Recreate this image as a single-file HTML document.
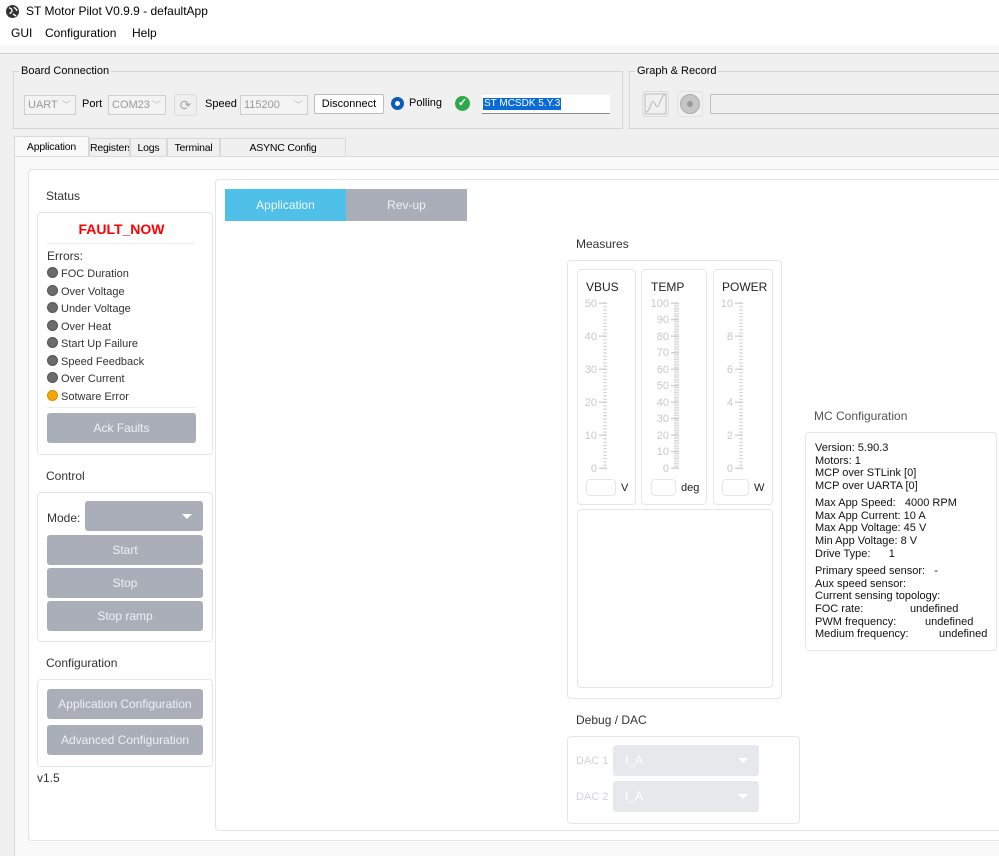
<!DOCTYPE html>
<html><head><meta charset="utf-8">
<style>
*{box-sizing:border-box;margin:0;padding:0}
body{width:999px;height:856px;overflow:hidden;background:#f0f0f0;font-family:"Liberation Sans",sans-serif;position:relative;color:#000}
.a{position:absolute}
.t{position:absolute;white-space:nowrap;font-size:12px}
.box{position:absolute;border:1px solid #e6e6e6;border-radius:4px;background:#fff}
.btn{position:absolute;background:#a9aeb8;border-radius:3px;color:#eef0f3;font-size:12px;text-align:center}
.lbl{position:absolute;font-size:12px;color:#333;white-space:nowrap}
.dot{display:inline-block;width:11px;height:11px;border-radius:50%;background:#6b6b6b;border:1px solid #555;vertical-align:-1px;margin-right:3px}
.er{position:absolute;left:47px;font-size:11px;color:#333;white-space:nowrap}
.cb{position:absolute;border:1px solid #cfcfcf;background:#f3f3f3;color:#999;font-size:11px;padding-left:3px;line-height:18px;white-space:nowrap;overflow:hidden}
.cb i{position:absolute;right:4px;top:0;font-style:normal;color:#bbb;font-size:9px}
.tab{position:absolute;top:138px;height:19px;border:1px solid #d9d9d9;border-bottom:none;background:#f0f0f0;font-size:10.5px;text-align:center;line-height:19px;white-space:nowrap;overflow:hidden;letter-spacing:-0.2px}
.mc{position:absolute;left:815px;font-size:11px;white-space:nowrap;color:#111}
</style></head><body>
<div class="a" style="left:0;top:0;width:999px;height:46px;background:#fff"></div>
<svg class="a" style="left:5px;top:4px" width="15" height="15" viewBox="0 0 15 15"><circle cx="7.5" cy="7.5" r="6.5" fill="#333"/><path d="M4 4c2 0 3 1 3 3s-2 1-2 3M9 3c1 2 3 2 3 4M8 10c1 1 2 1 3 2" stroke="#fff" stroke-width="1.3" fill="none"/></svg>
<div class="t" style="left:26px;top:4px;font-size:12px">ST Motor Pilot V0.9.9 - defaultApp</div>
<div class="t" style="left:11px;top:26px">GUI</div>
<div class="t" style="left:45px;top:26px">Configuration</div>
<div class="t" style="left:132px;top:26px">Help</div>
<div class="a" style="left:0;top:46px;width:999px;height:8px;background:#f7f7f7;border-bottom:1px solid #cfcfcf"></div>

<!-- Board connection -->
<div class="a" style="left:13px;top:71px;width:610px;height:58px;border:1px solid #d6d6d6"></div>
<div class="t" style="left:19px;top:65px;font-size:11px;background:#f0f0f0;padding:0 2px">Board Connection</div>
<div class="cb" style="left:24px;top:95px;width:52px;height:20px">UART<i>﹀</i></div>
<div class="t" style="left:82px;top:98px;font-size:11px">Port</div>
<div class="cb" style="left:108px;top:95px;width:58px;height:20px">COM23<i>﹀</i></div>
<div class="a" style="left:174px;top:94px;width:23px;height:22px;border:1px solid #dcdcdc;border-radius:3px;color:#aaa;font-size:14px;text-align:center;line-height:20px">⟳</div>
<div class="t" style="left:205px;top:98px;font-size:11px">Speed</div>
<div class="cb" style="left:240px;top:95px;width:68px;height:20px">115200<i>﹀</i></div>
<div class="a" style="left:314px;top:94px;width:70px;height:20px;border:1px solid #bdbdbd;border-radius:2px;background:#fdfdfd;font-size:11px;text-align:center;line-height:18px">Disconnect</div>
<div class="a" style="left:391px;top:97px;width:13px;height:13px;border-radius:50%;background:#0a5cb8"><div class="a" style="left:4px;top:4px;width:5px;height:5px;border-radius:50%;background:#fff"></div></div>
<div class="t" style="left:409px;top:97px;font-size:11px">Polling</div>
<div class="a" style="left:455px;top:96px;width:15px;height:15px;border-radius:50%;background:#2eaa4a;color:#fff;font-size:11px;text-align:center;line-height:15px;font-weight:bold">✓</div>
<div class="a" style="left:482px;top:95px;width:128px;height:19px;background:#fff;border-bottom:1px solid #888"><span style="position:absolute;left:1px;top:3px;background:#0a6ad8;color:#fff;font-size:10px;line-height:12px;padding:0 1px">ST MCSDK 5.Y.3</span></div>

<!-- Graph & Record -->
<div class="a" style="left:629px;top:71px;width:380px;height:58px;border:1px solid #d6d6d6"></div>
<div class="t" style="left:635px;top:65px;font-size:11px;background:#f0f0f0;padding:0 2px">Graph &amp; Record</div>
<div class="a" style="left:642px;top:91px;width:27px;height:26px;border:1px solid #dcdcdc;border-radius:3px"><svg width="25" height="24"><rect x="2" y="2" width="21" height="20" fill="none" stroke="#bbb"/><path d="M3 20C8 20 8 3 12 12S17 3 22 3" stroke="#bbb" fill="none"/></svg></div>
<div class="a" style="left:677px;top:91px;width:26px;height:26px;border:1px solid #e2e2e2;border-radius:3px"><div class="a" style="left:2px;top:2px;width:20px;height:20px;border-radius:50%;background:#c6c6c6;border:1px solid #aaa"></div><div class="a" style="left:9px;top:9px;width:6px;height:6px;border-radius:50%;background:#999"></div></div>
<div class="a" style="left:710px;top:94px;width:300px;height:20px;border:1px solid #bfbfbf;border-radius:2px"></div>

<!-- tabs -->
<div class="tab" style="left:14px;width:75px;background:#f9f9f9;top:136px;height:21px;line-height:21px">Application</div>
<div class="tab" style="left:89px;width:41px">Registers</div>
<div class="tab" style="left:130px;width:37px">Logs</div>
<div class="tab" style="left:167px;width:53px">Terminal</div>
<div class="tab" style="left:220px;width:126px">ASYNC Config</div>
<div class="a" style="left:14px;top:156px;width:985px;height:700px;background:#f9f9f9;border-top:1px solid #d9d9d9;border-left:1px solid #d9d9d9"></div>
<div class="a" style="left:28px;top:169px;width:980px;height:672px;background:#fff;border:1px solid #e4e4e4;border-radius:4px"></div>

<!-- Status -->
<div class="lbl" style="left:46px;top:189px">Status</div>
<div class="box" style="left:37px;top:212px;width:176px;height:243px"></div>
<div class="a" style="left:47px;top:221px;width:149px;text-align:center;color:#f00;font-weight:bold;font-size:14px">FAULT_NOW</div>
<div class="a" style="left:47px;top:243px;width:149px;height:1px;background:#eee"></div>
<div class="er" style="top:249px;font-size:12px">Errors:</div>
<div class="er" style="top:267px"><span class="dot"></span>FOC Duration</div>
<div class="er" style="top:285px"><span class="dot"></span>Over Voltage</div>
<div class="er" style="top:302px"><span class="dot"></span>Under Voltage</div>
<div class="er" style="top:320px"><span class="dot"></span>Over Heat</div>
<div class="er" style="top:337px"><span class="dot"></span>Start Up Failure</div>
<div class="er" style="top:355px"><span class="dot"></span>Speed Feedback</div>
<div class="er" style="top:372px"><span class="dot"></span>Over Current</div>
<div class="er" style="top:390px"><span class="dot" style="background:#f7a800;border-color:#d88c00"></span>Sotware Error</div>
<div class="a" style="left:47px;top:407px;width:149px;height:1px;background:#eee"></div>
<div class="btn" style="left:47px;top:413px;width:149px;height:30px;line-height:30px">Ack Faults</div>

<!-- Control -->
<div class="lbl" style="left:46px;top:469px">Control</div>
<div class="box" style="left:37px;top:492px;width:176px;height:150px"></div>
<div class="lbl" style="left:47px;top:511px">Mode:</div>
<div class="btn" style="left:85px;top:501px;width:118px;height:30px"><div class="a" style="right:11px;top:13px;border-left:5px solid transparent;border-right:5px solid transparent;border-top:5px solid #fff"></div></div>
<div class="btn" style="left:47px;top:535px;width:156px;height:30px;line-height:30px">Start</div>
<div class="btn" style="left:47px;top:568px;width:156px;height:30px;line-height:30px">Stop</div>
<div class="btn" style="left:47px;top:601px;width:156px;height:30px;line-height:30px">Stop ramp</div>

<!-- Configuration -->
<div class="lbl" style="left:46px;top:656px">Configuration</div>
<div class="box" style="left:37px;top:679px;width:176px;height:88px"></div>
<div class="btn" style="left:47px;top:689px;width:156px;height:30px;line-height:30px">Application Configuration</div>
<div class="btn" style="left:47px;top:725px;width:156px;height:30px;line-height:30px">Advanced Configuration</div>
<div class="lbl" style="left:37px;top:771px">v1.5</div>

<!-- main -->
<div class="box" style="left:215px;top:179px;width:800px;height:652px"></div>
<div class="a" style="left:225px;top:189px;width:121px;height:32px;background:#4fc0e8;color:#eefaff;font-size:12px;text-align:center;line-height:32px">Application</div>
<div class="a" style="left:346px;top:189px;width:121px;height:32px;background:#a9aeb8;color:#eef0f3;font-size:12px;text-align:center;line-height:32px">Rev-up</div>

<div class="lbl" style="left:576px;top:237px">Measures</div>
<div class="box" style="left:567px;top:260px;width:215px;height:439px"></div>
<div class="box" style="left:577px;top:269px;width:59px;height:236px"></div>
<div class="box" style="left:641px;top:269px;width:66px;height:236px"></div>
<div class="box" style="left:713px;top:269px;width:60px;height:236px"></div>
<div class="box" style="left:577px;top:509px;width:196px;height:179px"></div>
<div class="lbl" style="left:586px;top:280px;color:#222">VBUS</div>
<div class="lbl" style="left:651px;top:280px;color:#222">TEMP</div>
<div class="lbl" style="left:722px;top:280px;color:#222">POWER</div>
<svg class="a" style="left:0;top:0" width="999" height="856" font-family="Liberation Sans" font-size="11" fill="#c8c8c8">
<defs>
<pattern id="p1" patternUnits="userSpaceOnUse" width="10" height="3.3" y="303"><rect x="0" y="0" width="10" height="1" fill="#cfcfcf"/></pattern>
<pattern id="p2" patternUnits="userSpaceOnUse" width="10" height="1.65" y="303"><rect x="0" y="0" width="10" height="0.8" fill="#cfcfcf"/></pattern>
</defs>
<rect x="603" y="303" width="4" height="166" fill="url(#p1)"/>
<rect x="674" y="303" width="5" height="166" fill="url(#p2)"/>
<rect x="739" y="303" width="4" height="166" fill="url(#p1)"/>
<g fill="#cfcfcf">
<rect x="599" y="302.5" width="8" height="1.3"/><rect x="599" y="335.5" width="8" height="1.3"/><rect x="599" y="368.5" width="8" height="1.3"/><rect x="599" y="401.5" width="8" height="1.3"/><rect x="599" y="434.5" width="8" height="1.3"/><rect x="599" y="467.5" width="8" height="1.3"/>
<rect x="735" y="302.5" width="8" height="1.3"/><rect x="735" y="335.5" width="8" height="1.3"/><rect x="735" y="368.5" width="8" height="1.3"/><rect x="735" y="401.5" width="8" height="1.3"/><rect x="735" y="434.5" width="8" height="1.3"/><rect x="735" y="467.5" width="8" height="1.3"/>
<rect x="671" y="302.5" width="8" height="1.3"/><rect x="671" y="319" width="8" height="1.3"/><rect x="671" y="335.5" width="8" height="1.3"/><rect x="671" y="352" width="8" height="1.3"/><rect x="671" y="368.5" width="8" height="1.3"/><rect x="671" y="385" width="8" height="1.3"/><rect x="671" y="401.5" width="8" height="1.3"/><rect x="671" y="418" width="8" height="1.3"/><rect x="671" y="434.5" width="8" height="1.3"/><rect x="671" y="451" width="8" height="1.3"/><rect x="671" y="467.5" width="8" height="1.3"/>
</g>
<g text-anchor="end">
<text x="597" y="307">50</text><text x="597" y="340">40</text><text x="597" y="373">30</text><text x="597" y="406">20</text><text x="597" y="439">10</text><text x="597" y="472">0</text>
<text x="669" y="307">100</text><text x="669" y="323">90</text><text x="669" y="340">80</text><text x="669" y="356">70</text><text x="669" y="373">60</text><text x="669" y="389">50</text><text x="669" y="406">40</text><text x="669" y="422">30</text><text x="669" y="439">20</text><text x="669" y="455">10</text><text x="669" y="472">0</text>
<text x="733" y="307">10</text><text x="733" y="340">8</text><text x="733" y="373">6</text><text x="733" y="406">4</text><text x="733" y="439">2</text><text x="733" y="472">0</text>
</g>
</svg>
<div class="box" style="left:586px;top:479px;width:30px;height:17px"></div>
<div class="lbl" style="left:621px;top:482px;font-size:11px;color:#222">V</div>
<div class="box" style="left:651px;top:479px;width:25px;height:17px"></div>
<div class="lbl" style="left:681px;top:482px;font-size:11px;color:#222">deg</div>
<div class="box" style="left:722px;top:479px;width:27px;height:17px"></div>
<div class="lbl" style="left:754px;top:482px;font-size:11px;color:#222">W</div>

<div class="lbl" style="left:576px;top:713px">Debug / DAC</div>
<div class="box" style="left:567px;top:736px;width:233px;height:88px"></div>
<div class="lbl" style="left:576px;top:755px;color:#d0d4da;font-size:11px">DAC 1</div>
<div class="a" style="left:613px;top:745px;width:146px;height:31px;background:#e6e8ec;border-radius:3px;color:#fff;font-size:12px;line-height:31px;padding-left:12px">I_A<div class="a" style="right:11px;top:13px;border-left:5px solid transparent;border-right:5px solid transparent;border-top:5px solid #fff"></div></div>
<div class="lbl" style="left:576px;top:791px;color:#d0d4da;font-size:11px">DAC 2</div>
<div class="a" style="left:613px;top:781px;width:146px;height:31px;background:#e6e8ec;border-radius:3px;color:#fff;font-size:12px;line-height:31px;padding-left:12px">I_A<div class="a" style="right:11px;top:13px;border-left:5px solid transparent;border-right:5px solid transparent;border-top:5px solid #fff"></div></div>

<div class="lbl" style="left:814px;top:409px;color:#555">MC Configuration</div>
<div class="box" style="left:805px;top:432px;width:192px;height:219px"></div>
<div class="mc" style="top:442px">Version: 5.90.3</div>
<div class="mc" style="top:455px">Motors: 1</div>
<div class="mc" style="top:467px">MCP over STLink [0]</div>
<div class="mc" style="top:480px">MCP over UARTA [0]</div>
<div class="mc" style="top:497px">Max App Speed: &nbsp;&nbsp;4000 RPM</div>
<div class="mc" style="top:510px">Max App Current: 10 A</div>
<div class="mc" style="top:522px">Max App Voltage: 45 V</div>
<div class="mc" style="top:535px">Min App Voltage: 8 V</div>
<div class="mc" style="top:548px">Drive Type: &nbsp;&nbsp;&nbsp;&nbsp;&nbsp;1</div>
<div class="mc" style="top:565px">Primary speed sensor: &nbsp;&nbsp;-</div>
<div class="mc" style="top:578px">Aux speed sensor:</div>
<div class="mc" style="top:590px">Current sensing topology:</div>
<div class="mc" style="top:603px">FOC rate:<span style="position:absolute;left:95px">undefined</span></div>
<div class="mc" style="top:616px">PWM frequency:<span style="position:absolute;left:110px">undefined</span></div>
<div class="mc" style="top:628px">Medium frequency:<span style="position:absolute;left:124px">undefined</span></div>
</body></html>
